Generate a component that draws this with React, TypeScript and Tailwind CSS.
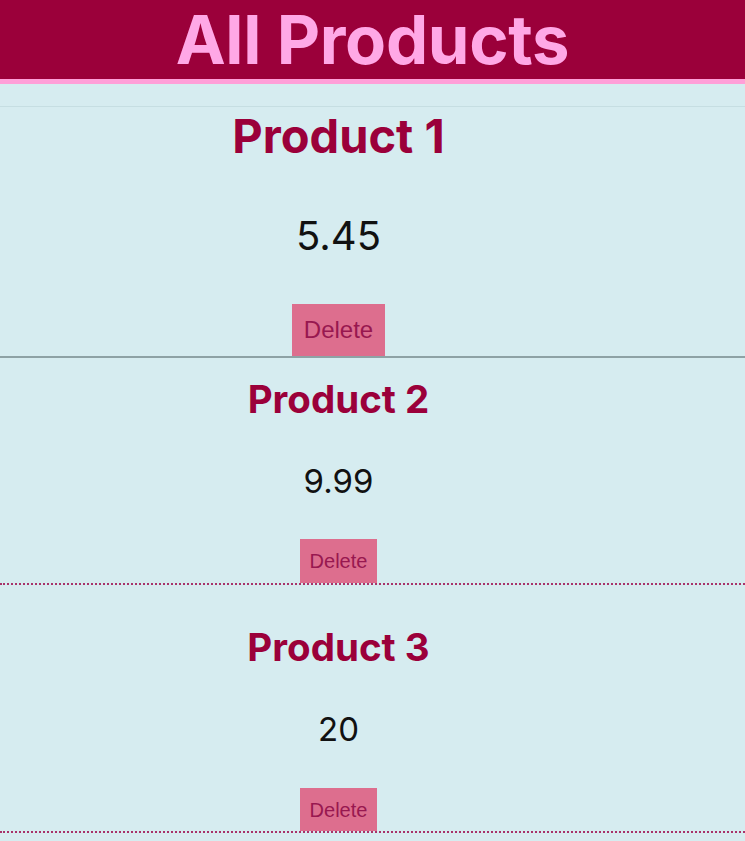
const products = [
  { name: 'Product 1', price: '5.45' },
  { name: 'Product 2', price: '9.99' },
  { name: 'Product 3', price: '20' },
];

const inter = { fontFamily: 'Inter, "Noto Sans", sans-serif' };
const arial = { fontFamily: '"Liberation Sans", Arial, sans-serif' };

export default function App() {
  return (
    <div className="min-h-[841px] bg-[#d6ecf0]" style={inter}>
      {/* Header */}
      <header className="h-[84px] bg-[#9b003a] border-b-[5px] border-[#ff9fd8] flex justify-center">
        <h1 className="text-[67px] leading-[79px] font-bold text-[#ffa8e6] tracking-[-0.3px]">
          All Products
        </h1>
      </header>
      <div className="h-[22px]" />
      <div className="h-px bg-[#c6dee2]" />

      {/* Product 1 */}
      <section className="w-[677px] flex flex-col items-center">
        <h2 className="text-[47px] leading-[58px] font-bold text-[#9b003a]">
          {products[0].name}
        </h2>
        <p className="mt-[46px] text-[40px] leading-[50px] text-[#111]">
          {products[0].price}
        </p>
        <button
          style={arial}
          className="mt-[43px] w-[93px] h-[52px] bg-[#dd6e8e] text-[#981850] text-[24px]">
          Delete
        </button>
      </section>
      <div className="h-[2px] bg-[#8ea2a5]" />

      {/* Product 2 */}
      <section className="w-[677px] flex flex-col items-center pt-[18px]">
        <h2 className="text-[38.5px] leading-[46px] font-bold text-[#9b003a]">
          {products[1].name}
        </h2>
        <p className="mt-[41px] text-[33px] leading-[36px] text-[#111]">
          {products[1].price}
        </p>
        <button
          style={arial}
          className="mt-[40px] w-[77px] h-[44px] bg-[#dd6e8e] text-[#981850] text-[20px]">
          Delete
        </button>
      </section>
      <div className="border-b-2 border-dotted border-[#a8336a]" />

      {/* Product 3 */}
      <section className="w-[677px] flex flex-col items-center pt-[39px]">
        <h2 className="text-[38.5px] leading-[46px] font-bold text-[#9b003a]">
          {products[2].name}
        </h2>
        <p className="mt-[40px] text-[33px] leading-[38px] text-[#111]">
          {products[2].price}
        </p>
        <button
          style={arial}
          className="mt-[40px] w-[77px] h-[43px] bg-[#dd6e8e] text-[#981850] text-[20px]">
          Delete
        </button>
      </section>
      <div className="border-b-2 border-dotted border-[#a8336a]" />
    </div>
  );
}
